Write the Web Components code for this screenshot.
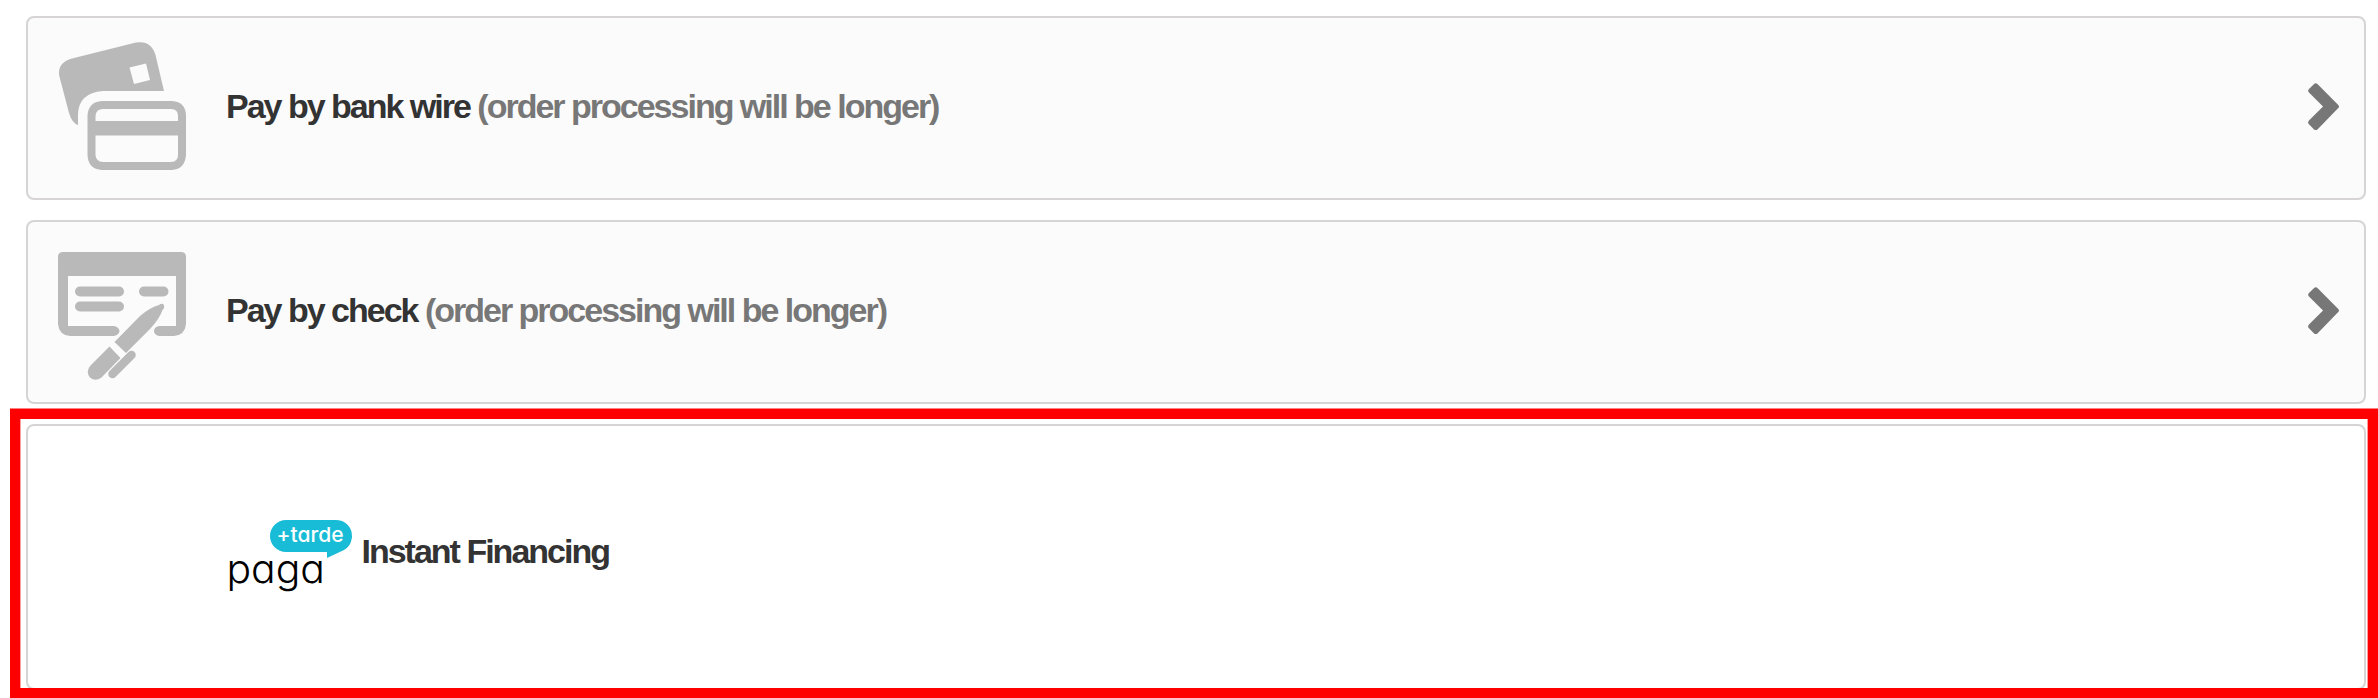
<!DOCTYPE html>
<html lang="en"><head><meta charset="utf-8"><title>Payment methods</title>
<style>html,body{margin:0;background:#fff}body{width:2378px;height:698px;overflow:hidden}</style></head>
<body>
<payment-list>
  <payment-option><bank-icon slot="icon"></bank-icon>Pay by bank wire <span>(order processing will be longer)</span><chevron-icon slot="end"></chevron-icon></payment-option>
  <payment-option><check-icon slot="icon"></check-icon>Pay by check <span>(order processing will be longer)</span><chevron-icon slot="end"></chevron-icon></payment-option>
  <highlight-frame slot="featured"><payment-option class="plain"><paga-logo></paga-logo>Instant Financing</payment-option></highlight-frame>
</payment-list>
<script>
const define = (name, html) => customElements.define(name, class extends HTMLElement {
  constructor() { super(); this.attachShadow({ mode: 'open' }).innerHTML = html; }
});

define('payment-list', `<style>
:host{display:flex;flex-direction:column;box-sizing:border-box;width:2378px;height:698px;padding-top:16px;font:bold 34px/46px "Liberation Sans",Arial,sans-serif;letter-spacing:-2px;color:#333}
.rows{display:flex;flex-direction:column;gap:20px;padding:0 12px 4px 26px}
</style><div class="rows"><slot></slot></div><slot name="featured"></slot>`);

define('payment-option', `<style>
:host{display:flex;align-items:center;box-sizing:border-box;height:184px;padding:0 25px 0 30px;border:2px solid #d6d4d4;border-radius:8px;background:#fbfbfb}
:host(.plain){height:266px;background:#fff}
.icon{width:128px;height:128px;margin-right:40px;flex:none}
.label{flex:1;white-space:pre;margin-bottom:4px}
:host(.plain) .label{margin-bottom:12px}
::slotted(span){color:#777}
</style><div class="icon"><slot name="icon"></slot></div><div class="label"><slot></slot></div><slot name="end"></slot>`);

define('highlight-frame', `<style>
:host{display:block;box-sizing:border-box;height:290px;margin-left:10px;border-top:1px solid #ff8080}
.frame{box-sizing:border-box;height:289px;border:10px solid red;overflow:hidden}
.inner{box-sizing:border-box;height:269px;border:solid #ff9c9c;border-width:0 1px;padding:5px 1px 0 5px}
</style><div class="frame"><div class="inner"><slot></slot></div></div>`);

define('bank-icon', `<style>:host,svg{display:block}svg{margin-top:-2px}</style>
<svg width="128" height="128" viewBox="0 0 128 128" fill="#b9b9b9">
<path fill-rule="evenodd" d="M14 16.500L78 .6Q93-2 97.500 13L106 49H45Q20 51 20 73V83Q14 81 11 71L1.300 34Q-1 21 14 16.500ZM71.500 25.500L76 42L92 38L88 21.500Z"/>
<path fill-rule="evenodd" d="M44 59H114Q128 60 128 74V113Q127 127 114 128H44Q30 127 29.500 113V74Q30 60 44 59ZM37.500 79H120V74Q120 67 113 67H45Q38 67 37.500 74ZM37.500 93.500V113Q38 119.500 45 120H113Q120 119.500 120 113V93.500Z"/></svg>`);

define('check-icon', `<style>:host,svg{display:block}svg{margin-top:4px}</style>
<svg width="128" height="128" viewBox="0 0 128 128" fill="#b9b9b9">
<path d="M5 0H123Q128 0 128 5V72Q127 83 116 84H101Q96 82.500 96 79Q96 75 101 74H118V24H10V74H56Q61 75 61.500 79Q61 83 56 84H12Q1 83 0 72V5Q0 0 5 0Z"/>
<g stroke="#b9b9b9" stroke-width="10" stroke-linecap="round"><path d="M22 39.500H61M22 54.500H61M86 39.500H105.500"/><path d="M73.500 103L54.500 122" stroke-width="8.500"/></g>
<path d="M56.500 90L82 64Q91 56 101 53Q104 50.500 106 53Q107 55.500 104.500 58Q102 66 92 77L68 101Z"/>
<path d="M51.500 94.500L62.500 106L43.500 125.500Q37 130 32 125.500Q27 119 33 113Z"/></svg>`);

define('chevron-icon', `<style>:host,svg{display:block}:host{margin-bottom:3px}</style>
<svg width="31" height="48" viewBox="0 0 32 48" preserveAspectRatio="none"><path fill="#777" d="M6 1.200Q8 -.7 10 1.200L31 21.700Q33 23.500 31 25.300L10 46.200Q8 48 6 46.200L1 41.200Q-.8 39.500 1 37.500L15.500 23.500L1 9.500Q-.8 7.800 1 6Z"/></svg>`);

define('paga-logo', `<style>
:host{display:inline-block;vertical-align:top;width:135.500px;height:0;letter-spacing:0}
svg{display:block;overflow:visible;margin-top:-8px}
text{font-family:Inter,sans-serif;font-feature-settings:"cv11"}
</style><svg width="126" height="76" viewBox="0 0 126 76">
<path fill="#18bcd6" d="M60 0H110A16 16 0 0 1 118 29.900L101 38V32H60A16 16 0 0 1 60 0Z"/>
<text x="50.500" y="21.500" font-size="20.500" font-weight="500" fill="#fff" textLength="67" lengthAdjust="spacingAndGlyphs">+tarde</text>
<text x="0.500" y="62.500" font-size="39.500" font-weight="300" fill="#000" textLength="98.500" lengthAdjust="spacingAndGlyphs">paga</text></svg>`);
</script>
</body></html>
